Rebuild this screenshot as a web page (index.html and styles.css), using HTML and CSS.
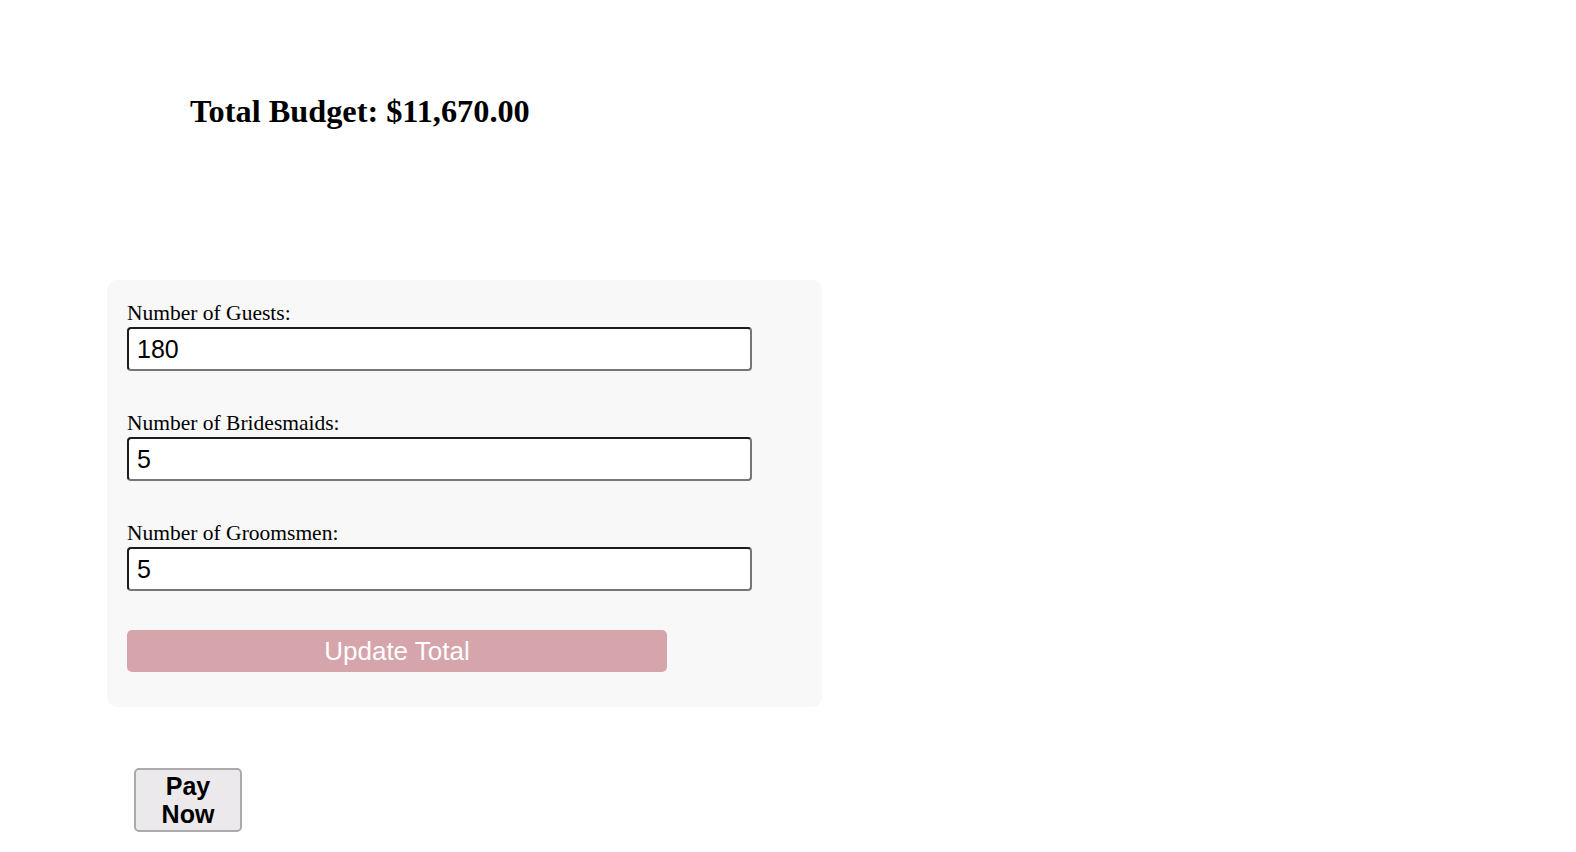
FILE: index.html
```
<!DOCTYPE html>
<html lang="en">
<head>
<meta charset="utf-8">
<title>Wedding Budget</title>
<link rel="stylesheet" href="styles.css">
</head>
<body>
<div class="page">
  <h1 class="total">Total Budget: $11,670.00</h1>
  <form class="panel" onsubmit="return false;">
    <div class="field">
      <label class="field-label" for="guests">Number of Guests:</label>
      <input class="field-input" id="guests" type="text" value="180">
    </div>
    <div class="field">
      <label class="field-label" for="bridesmaids">Number of Bridesmaids:</label>
      <input class="field-input" id="bridesmaids" type="text" value="5">
    </div>
    <div class="field">
      <label class="field-label" for="groomsmen">Number of Groomsmen:</label>
      <input class="field-input" id="groomsmen" type="text" value="5">
    </div>
    <button class="update-btn" type="button">Update Total</button>
  </form>
  <button class="pay-btn" type="button">Pay Now</button>
</div>
</body>
</html>
```
FILE: styles.css
```
html, body {
  margin: 0;
  padding: 0;
  background: #ffffff;
}

.page {
  display: flex;
  flex-direction: column;
  align-items: flex-start;
  padding-top: 93px;
  font-family: "Liberation Serif", "Times New Roman", serif;
  color: #000;
}

.total {
  margin: 0 0 0 190px;
  font-family: "Liberation Serif", "Times New Roman", serif;
  font-weight: bold;
  font-size: 32.3px;
  line-height: 37px;
}

.panel {
  margin: 150px 0 0 107px;
  width: 715px;
  box-sizing: border-box;
  padding: 20px 20px 35px 20px;
  background: #f8f8f8;
  border-radius: 10px;
  display: flex;
  flex-direction: column;
  gap: 39px;
}

.field {
  display: flex;
  flex-direction: column;
  align-items: flex-start;
  gap: 2px;
}

.field-label {
  font-family: "Liberation Serif", "Times New Roman", serif;
  font-size: 21.5px;
  line-height: 24px;
  padding-top: 1px;
  color: #000;
}

.field-input {
  width: 625px;
  height: 44px;
  box-sizing: border-box;
  padding: 0 8px;
  margin: 0;
  font-family: "Liberation Sans", Arial, sans-serif;
  font-size: 25px;
  color: #000;
  background: #fff;
  border-width: 2px;
  border-style: solid;
  border-color: #1c1c1c #767676 #767676 #1c1c1c;
  border-radius: 4px;
  outline: none;
}

.update-btn {
  margin-top: 0;
  width: 540px;
  height: 42px;
  border: none;
  border-radius: 5px;
  background: #d6a4ab;
  color: #fff;
  font-family: "Liberation Sans", Arial, sans-serif;
  font-size: 26px;
  padding: 0;
  cursor: pointer;
}

.pay-btn {
  margin: 61px 0 0 134px;
  width: 108px;
  box-sizing: border-box;
  padding: 2px 6px;
  background: #ebe9eb;
  border: 2px solid #ababab;
  border-radius: 5px;
  color: #000;
  font-family: "Liberation Sans", Arial, sans-serif;
  font-weight: bold;
  font-size: 25px;
  line-height: 28px;
  cursor: pointer;
}
```
